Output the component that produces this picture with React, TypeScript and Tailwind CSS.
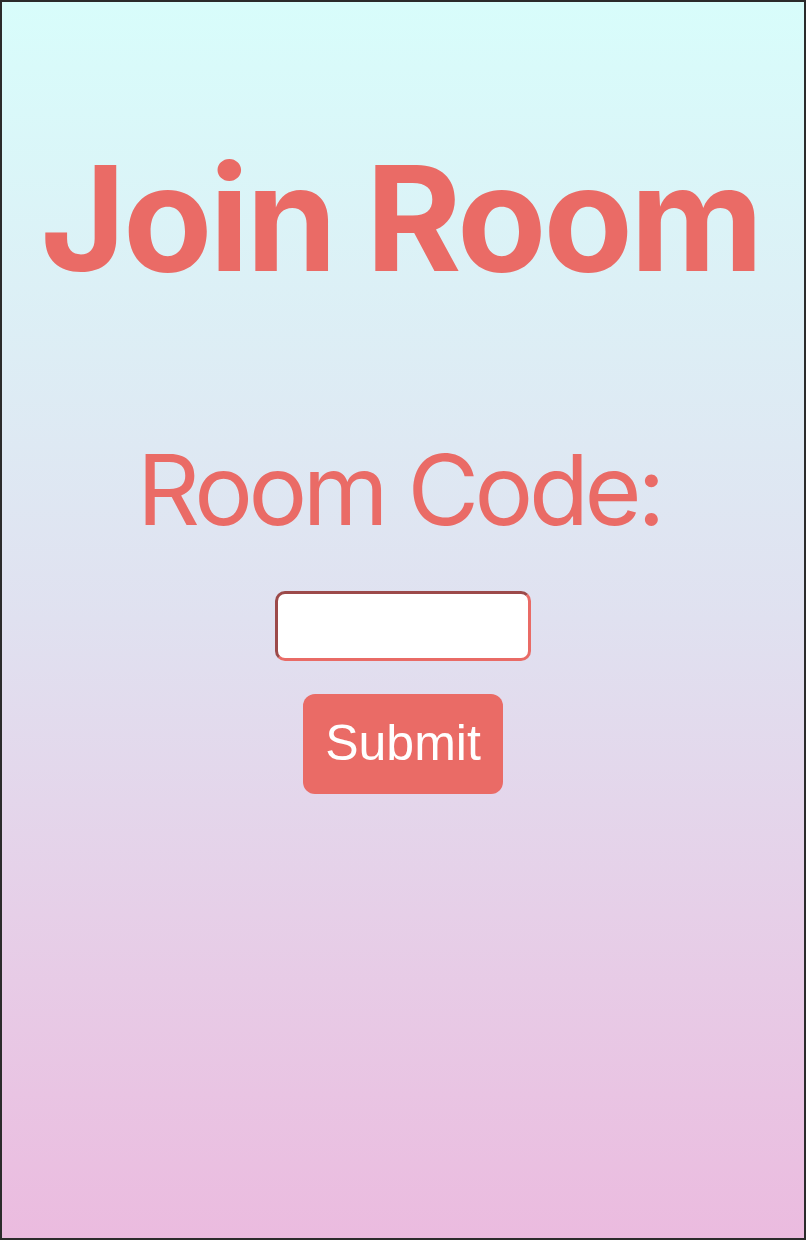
import React, { useState } from 'react';

const App = () => {
  const [code, setCode] = useState('');

  return (
    <div className="h-[1240px] w-[806px] border-2 border-[#2b2b2b] bg-gradient-to-b from-[#d8fdfb] via-[#e0e1f0] to-[#ebbbdf] font-['Inter',sans-serif] text-[#ea6b66]">
      <div className="flex flex-col items-center">
        <h1 className="mr-[5px] mt-[129px] text-[146px] font-bold leading-[1.2] tracking-[-0.02em]">Join Room</h1>
        <p className="mr-[8px] mt-[125px] text-[98px] font-normal leading-[1.2] tracking-[-0.045em]">Room Code:</p>
        <input
          type="text"
          value={code}
          onChange={(e) => setCode(e.target.value)}
          className="mt-[42px] h-[70px] w-[256px] rounded-[10px] border-[3px] border-[#e96b66] border-t-[#9c4a4a] border-l-[#9c4a4a] bg-white px-2 text-3xl text-black outline-none"
        />
        <button className="mt-[33px] h-[100px] w-[200px] rounded-[12px] bg-[#ea6b66] font-['Liberation_Sans',Arial,sans-serif] text-[50px] text-white">
          Submit
        </button>
      </div>
    </div>
  );
};

export default App;
